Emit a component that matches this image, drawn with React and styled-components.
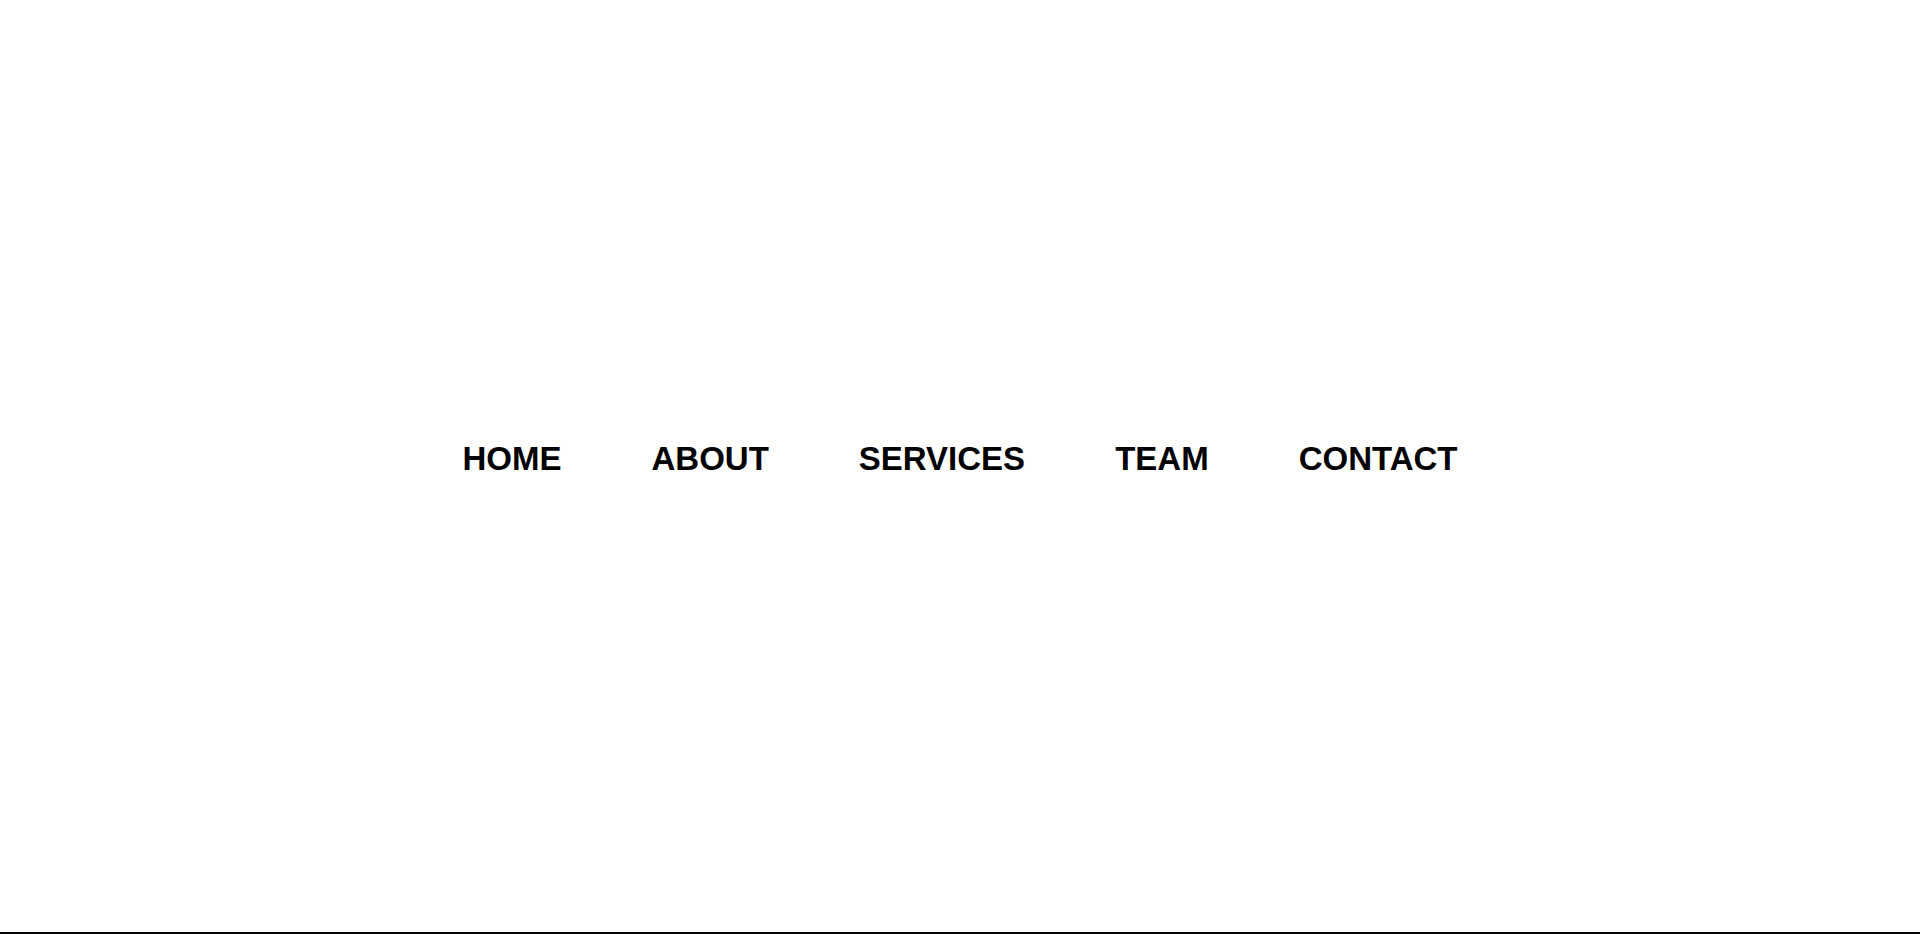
import styled, { createGlobalStyle } from "styled-components";

const GlobalStyle = createGlobalStyle`
  html, body {
    margin: 0;
    padding: 0;
    background: #ffffff;
  }
  * {
    box-sizing: border-box;
  }
`;

const links = ["HOME", "ABOUT", "SERVICES", "TEAM", "CONTACT"];

const App = () => {
    return (
        <>
            <GlobalStyle />
            <Page>
                <Menu>
                    {links.map((label) => (
                        <MenuItem key={label}>
                            <MenuLink href="#">{label}</MenuLink>
                        </MenuItem>
                    ))}
                </Menu>
            </Page>
        </>
    );
};

const Page = styled.div`
    height: 934px;
    display: flex;
    align-items: center;
    justify-content: center;
    padding: 0 0 14px 0;
    border-bottom: 2px solid #000;
`;

const Menu = styled.ul`
    display: flex;
    gap: 90px;
    margin: 0;
    padding: 0;
    list-style: none;
`;

const MenuItem = styled.li``;

const MenuLink = styled.a`
    font-family: "Liberation Sans", Arial, sans-serif;
    font-size: 33px;
    font-weight: 700;
    color: #000;
    text-decoration: none;
`;

export default App;
